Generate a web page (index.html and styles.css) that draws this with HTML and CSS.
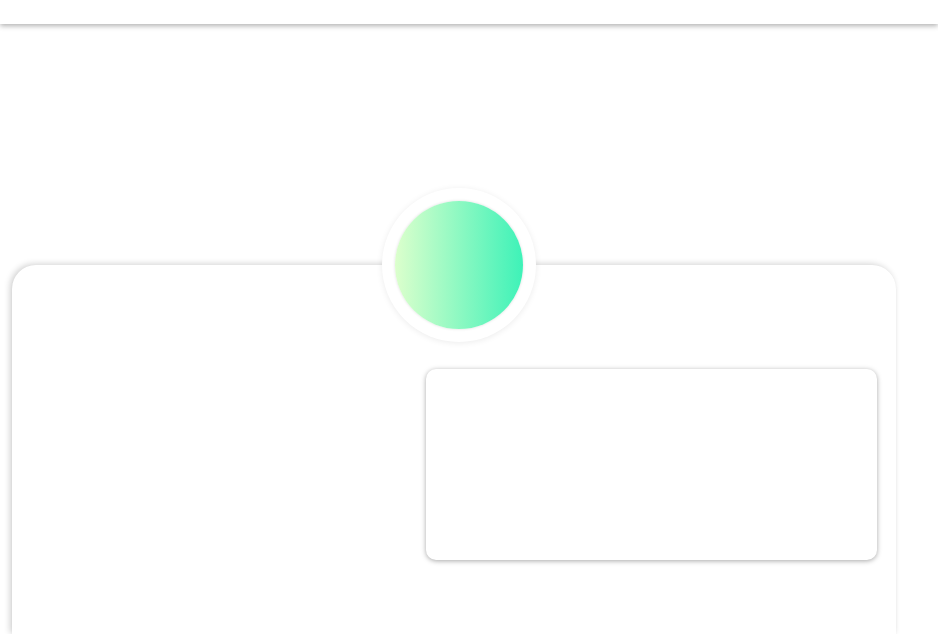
FILE: index.html
```html
<!DOCTYPE html>
<html>
<head>
<meta charset="utf-8">
<link rel="stylesheet" href="styles.css">
</head>
<body>
<header class="topbar"></header>
<main class="page">
  <section class="card">
    <div class="badge"><div class="badge-inner"></div></div>
    <div class="card-body">
      <div class="col-left"></div>
      <div class="panel"></div>
    </div>
  </section>
</main>
</body>
</html>
```
FILE: styles.css
```css
html, body {
  margin: 0;
  padding: 0;
  background: #ffffff;
  font-family: "Liberation Sans", Arial, sans-serif;
  overflow: hidden;
}
.topbar {
  height: 24px;
  width: 100%;
  background: #ffffff;
  box-shadow: 0 2px 5px rgba(0, 0, 0, 0.3);
  position: relative;
  z-index: 2;
}
.page {
  padding: 241px 42px 0 12px;
}
.card {
  position: relative;
  height: 369px;
  background: #ffffff;
  border-radius: 24px 24px 0 0;
  box-shadow: -2px -1px 6px rgba(0, 0, 0, 0.18), 0 2px 3px rgba(0, 0, 0, 0.04);
}
.badge {
  position: absolute;
  left: 370px;
  top: -77px;
  width: 154px;
  height: 154px;
  border-radius: 50%;
  background: #ffffff;
  box-shadow: 0 1px 6px rgba(0, 0, 0, 0.08);
  display: flex;
  align-items: center;
  justify-content: center;
}
.badge-inner {
  width: 128px;
  height: 128px;
  border-radius: 50%;
  background: linear-gradient(90deg, #dcffcc 0%, #3ef2b8 100%);
  box-shadow: 0 0 3px rgba(0, 0, 0, 0.14);
}
.card-body {
  display: grid;
  grid-template-columns: 1fr 451px;
  padding: 104px 19px 0 0;
}
.panel {
  height: 191px;
  border-radius: 10px;
  background: #ffffff;
  box-shadow: 0 1px 5px rgba(0, 0, 0, 0.35);
}
```
